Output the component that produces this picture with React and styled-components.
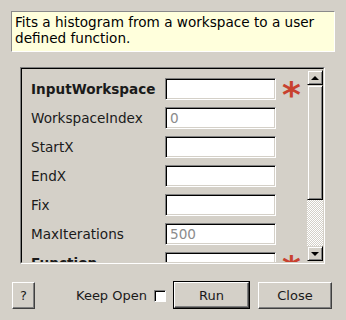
import React from "react";
import styled, { createGlobalStyle } from "styled-components";

const Global = createGlobalStyle`
  html, body { margin: 0; padding: 0; background: #d4d0c8; }
  body { font-family: "DejaVu Sans", "Liberation Sans", sans-serif; font-size: 13px; color: #000; }
`;

const Dialog = styled.div`
  width: 346px;
  height: 320px;
  box-sizing: border-box;
  padding: 11px 11px 0 11px;
  display: flex;
  flex-direction: column;
`;

const Tip = styled.div`
  box-sizing: border-box;
  height: 41px;
  width: 324px;
  background: #ffffdc;
  border-top: 1px solid #8a8a8a;
  border-left: 1px solid #8a8a8a;
  border-right: 1px solid #ffffff;
  border-bottom: 1px solid #ffffff;
  padding: 2px 3px;
  font-size: 13.6px;
  line-height: 16px;
  color: #000;
`;

const Frame = styled.div`
  margin: 15px 10px 0 9px;
  height: 197px;
  box-sizing: border-box;
  border-top: 1px solid #808080;
  border-left: 1px solid #808080;
  border-right: 1px solid #ffffff;
  border-bottom: 1px solid #ffffff;
  display: flex;
`;

const Inner = styled.div`
  flex: 1;
  display: flex;
  border-top: 1px solid #000;
  border-left: 1px solid #000;
  border-right: 1px solid #d4d0c8;
  border-bottom: 1px solid #d4d0c8;
  overflow: hidden;
`;

const Content = styled.div`
  flex: 1;
  padding: 9px 0 0 9px;
  display: flex;
  flex-direction: column;
  gap: 7px;
  overflow: hidden;
`;

const Row = styled.div`
  display: flex;
  align-items: flex-start;
  height: 22px;
  flex-shrink: 0;
`;

const Label = styled.div`
  width: 134px;
  height: 22px;
  line-height: 22px;
  font-size: 13.6px;
  font-weight: ${(p) => (p.$bold ? "bold" : "normal")};
  white-space: nowrap;
  color: #1a1a1a;
`;

const Field = styled.div`
  width: 111px;
  height: 22px;
  box-sizing: border-box;
  background: #fff;
  border-top: 1px solid #808080;
  border-left: 1px solid #808080;
  border-right: 1px solid #ffffff;
  border-bottom: 1px solid #ffffff;
  box-shadow: inset 1px 1px 0 #000, inset -1px -1px 0 #d4d0c8;
  padding: 0 4px;
  display: flex;
  align-items: center;
  font-size: 13.6px;
  color: #8c8c8c;
`;

const Star = styled.div`
  margin-left: 6px;
  width: 18px;
  height: 22px;
  color: #c8412f;
  font-weight: bold;
  font-size: 36px;
  line-height: 34px;
  text-align: center;
  overflow: visible;
`;

const Scroll = styled.div`
  width: 16px;
  display: flex;
  flex-direction: column;
  padding-top: 1px;
  padding-bottom: 1px;
`;

const Raised = styled.div`
  box-sizing: border-box;
  background: #d4d0c8;
  border-top: 1px solid #d4d0c8;
  border-left: 1px solid #d4d0c8;
  border-right: 1px solid #000;
  border-bottom: 1px solid #000;
  box-shadow: inset 1px 1px 0 #fff, inset -1px -1px 0 #808080;
  display: flex;
  align-items: center;
  justify-content: center;
  height: ${(p) => p.$h}px;
  flex-shrink: 0;
`;

const Trough = styled.div`
  flex: 1;
  background-color: #d4d0c8;
  background-image: linear-gradient(45deg, #fff 25%, transparent 25%, transparent 75%, #fff 75%),
    linear-gradient(45deg, #fff 25%, transparent 25%, transparent 75%, #fff 75%);
  background-size: 2px 2px;
  background-position: 0 0, 1px 1px;
`;

const Arrow = styled.div`
  width: 0;
  height: 0;
  border-left: 4px solid transparent;
  border-right: 4px solid transparent;
  ${(p) => (p.$up ? "border-bottom: 4px solid #000;" : "border-top: 4px solid #000;")}
`;

const Bottom = styled.div`
  display: flex;
  align-items: center;
  margin-top: 17px;
  height: 28px;
`;

const Button = styled.button`
  font: inherit;
  color: #1a1a1a;
  box-sizing: border-box;
  background: #d4d0c8;
  height: ${(p) => p.$h || 27}px;
  width: ${(p) => p.$w}px;
  padding: 0;
  margin-left: ${(p) => p.$ml || 0}px;
  border-top: 1px solid #fff;
  border-left: 1px solid #fff;
  border-right: 1px solid #404040;
  border-bottom: 1px solid #404040;
  box-shadow: inset -1px -1px 0 #808080;
`;

const DefaultWrap = styled.div`
  margin-left: 7px;
  border: 1px solid #000;
  display: flex;
`;

const KeepLabel = styled.span`
  margin-left: 41px;
  color: #1a1a1a;
`;

const Check = styled.div`
  width: 12px;
  height: 12px;
  box-sizing: border-box;
  margin-left: 7px;
  margin-top: 1px;
  background: #fff;
  border-top: 1px solid #808080;
  border-left: 1px solid #808080;
  border-right: 1px solid #fff;
  border-bottom: 1px solid #fff;
  box-shadow: inset 1px 1px 0 #000;
`;

const rows = [
  { label: "InputWorkspace", bold: true, req: true },
  { label: "WorkspaceIndex", value: "0" },
  { label: "StartX" },
  { label: "EndX" },
  { label: "Fix" },
  { label: "MaxIterations", value: "500" },
  { label: "Function", bold: true, req: true },
];

export default function App() {
  return (
    <>
      <Global />
      <Dialog>
        <Tip>Fits a histogram from a workspace to a user defined function.</Tip>
        <Frame>
          <Inner>
            <Content>
              {rows.map((r) => (
                <Row key={r.label}>
                  <Label $bold={r.bold}>{r.label}</Label>
                  <Field>{r.value || ""}</Field>
                  {r.req && <Star>*</Star>}
                </Row>
              ))}
            </Content>
            <Scroll>
              <Raised $h={15}>
                <Arrow $up />
              </Raised>
              <Raised $h={115} />
              <Trough />
              <Raised $h={15}>
                <Arrow />
              </Raised>
            </Scroll>
          </Inner>
        </Frame>
        <Bottom>
          <Button $w={23} $ml={1}>?</Button>
          <KeepLabel>Keep Open</KeepLabel>
          <Check />
          <DefaultWrap>
            <Button $w={75} $h={26}>Run</Button>
          </DefaultWrap>
          <Button $w={74} $ml={8}>Close</Button>
        </Bottom>
      </Dialog>
    </>
  );
}
